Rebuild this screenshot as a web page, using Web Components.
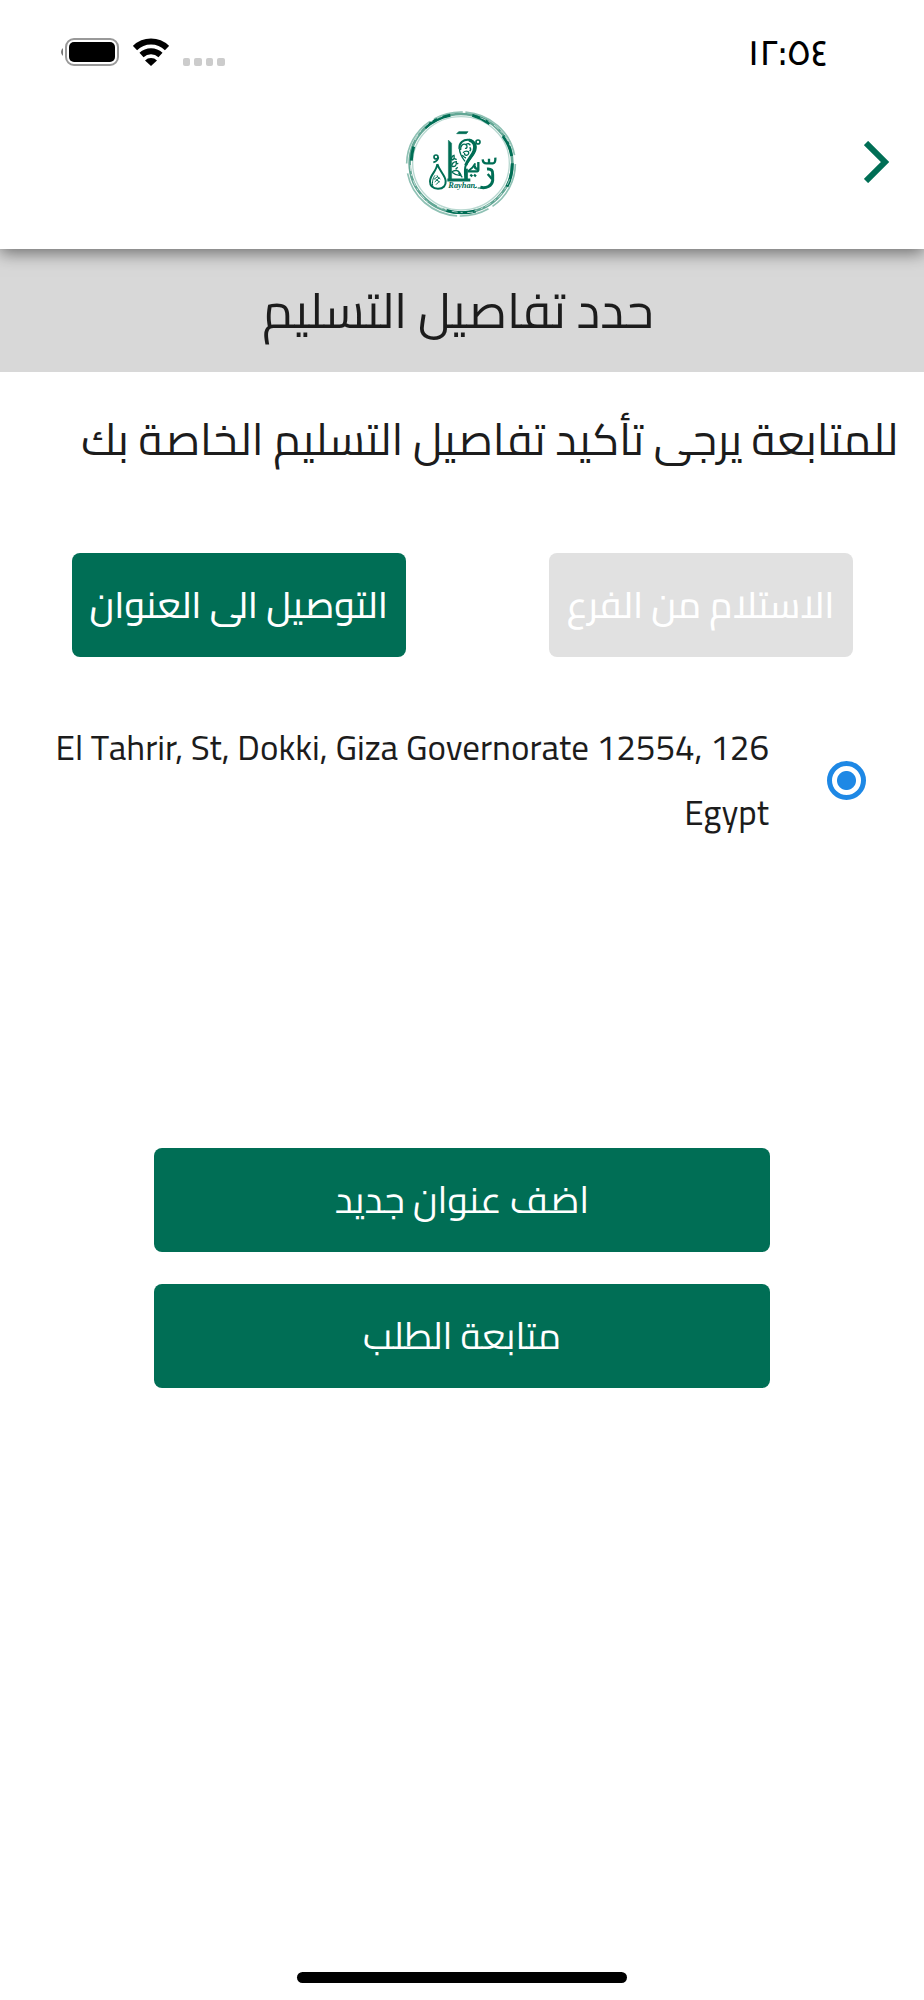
<!DOCTYPE html>
<html lang="ar" dir="rtl">
<head>
<meta charset="utf-8">
<meta name="viewport" content="width=device-width, initial-scale=1">
<title>حدد تفاصيل التسليم</title>
<style>
  body {
    margin: 0;
    background-color: #fff;
    color: #1c1c1c;
    font-family: Cairo, "Noto Sans", sans-serif;
  }
</style>
</head>
<body>
<delivery-page>
  <status-bar slot="top">١٢:٥٤</status-bar>
  <app-bar slot="top"></app-bar>
  <page-title>حدد تفاصيل التسليم</page-title>
  <page-intro>للمتابعة يرجى تأكيد تفاصيل التسليم الخاصة بك</page-intro>
  <delivery-options>
    <app-button kind="muted">الاستلام من الفرع</app-button>
    <app-button kind="choice">التوصيل الى العنوان</app-button>
  </delivery-options>
  <address-option>126 El Tahrir, St, Dokki, Giza Governorate 12554, Egypt</address-option>
  <page-actions>
    <app-button>اضف عنوان جديد</app-button>
    <app-button>متابعة الطلب</app-button>
  </page-actions>
</delivery-page>

<script>
class DeliveryPage extends HTMLElement {
  constructor() {
    super();
    this.attachShadow({ mode: "open" }).innerHTML = `
      <style>
        :host {
          display: flex;
          flex-direction: column;
          min-height: 100vh;
        }
        header {
          position: relative;
          background-color: #fff;
          box-shadow: 0 4px 16px rgba(0, 0, 0, 0.5);
        }
        main {
          flex: 1;
        }
        .home {
          width: calc(100% * 5 / 14);
          height: 11px;
          margin: 0 auto 17px;
          border-radius: 6px;
          background-color: #000;
        }
      </style>
      <header><slot name="top"></slot></header>
      <main><slot></slot></main>
      <div class="home"></div>
    `;
  }
}

class StatusBar extends HTMLElement {
  constructor() {
    super();
    this.attachShadow({ mode: "open" }).innerHTML = `
      <style>
        :host {
          display: flex;
          justify-content: space-between;
          align-items: center;
          height: 96px;
          padding: 4px 96px 0 60px;
          direction: ltr;
          color: #000;
        }
        .icons {
          display: flex;
          align-items: center;
          gap: 13px;
        }
        time {
          font-size: 36px;
          font-weight: 600;
          line-height: 48px;
        }
      </style>
      <div class="icons">
        <svg width="60" height="28" viewBox="0 0 60 28" role="img" aria-label="Battery">
          <path d="M3 10v8a5 5 0 0 1 0-8z" fill="#777"/>
          <rect x="6" y="1" width="52" height="26" rx="8" fill="none" stroke="#999" stroke-width="2"/>
          <rect x="9" y="4" width="46" height="20" rx="5"/>
        </svg>
        <svg width="36" height="28" viewBox="0 0 36 28" role="img" aria-label="Wi-Fi">
          <path d="M2 10a23 23 0 0 1 32 0" fill="none" stroke="#000" stroke-width="6"/>
          <path d="M8.500 17a14 14 0 0 1 19 0" fill="none" stroke="#000" stroke-width="6"/>
          <path d="M12 22.500a8.500 8.500 0 0 1 12 0L18 28z"/>
        </svg>
        <svg width="43" height="28" viewBox="0 0 43 28" fill="#ccc" aria-hidden="true">
          <rect x="1" y="20" width="7" height="8" rx="2"/>
          <rect x="12" y="20" width="8" height="8" rx="2"/>
          <rect x="24" y="20" width="7" height="8" rx="2"/>
          <rect x="35" y="20" width="8" height="8" rx="2"/>
        </svg>
      </div>
      <time><slot></slot></time>
    `;
  }
}

class BrandLogo extends HTMLElement {
  constructor() {
    super();
    this.attachShadow({ mode: "open" }).innerHTML = `
      <style>
        :host {
          display: block;
        }
        svg {
          display: block;
          width: 130px;
          height: 126px;
        }
      </style>
      <svg viewBox="0 0 390 378" fill="none" stroke="#006e55" role="img" aria-label="Rayhan">
        <!-- brushed ring -->
        <ellipse cx="192" cy="192" rx="163" ry="156" stroke="#8fc1b4" stroke-width="5" stroke-dasharray="150 14 90 8 210 30"/>
        <ellipse cx="192" cy="190" rx="154" ry="148" stroke="#63a795" stroke-width="8"/>
        <ellipse cx="192" cy="190" rx="145" ry="140" stroke="#b8d8d0" stroke-width="4"/>
        <path d="M50 140Q44 160 43 182M84 84Q115 55 160 46M226 46Q252 53 278 71M318 108Q340 138 344 168M346 190Q346 230 330 260M148 331Q190 345 236 333" stroke-width="9"/>
        <g stroke="#fff" stroke-width="2" stroke-dasharray="18 9 6 14">
          <path d="M40 195Q42 258 92 306M250 53Q320 80 345 150M338 238Q312 308 232 333"/>
          <path d="M54 120Q82 66 138 48M120 318Q172 344 232 336"/>
        </g>
        <!-- noon -->
        <path d="M121 192C119 214 99 224 99 244C99 260 110 266 123 266C140 266 147 256 146 243C145 226 127 213 121 192" stroke-width="6"/>
        <path d="M108 262C104 246 108 234 114 226M111 238l10-8M113 246l14-13M117 254l10-10M124 232l6 5M120 226l5 10M116 238l12 8" stroke-width="3"/>
        <circle cx="117" cy="171" r="6" stroke-width="5"/>
        <path d="M124 171Q124 183 109 187" stroke-width="5"/>
        <!-- alef, vine and base line -->
        <path d="M154 120L164 130V240H154z" fill="#006e55" stroke-width="1"/>
        <path d="M151 240H220" stroke-width="9"/>
        <path d="M164 216Q172 210 180 212T192 226Q178 228 164 216M164 199Q180 202 178 185Q165 186 164 199M164 180Q174 179 171 166Q162 169 164 180M171 175l8 4M176 192l8-2M176 208l6-6M184 218l12 14" stroke-width="4"/>
        <!-- haa with the scroll inside -->
        <path d="M187 146C186 128 200 118 214 119C232 121 240 136 235 151C230 168 213 180 206 197C202 208 204 222 205 238" stroke-width="6"/>
        <path d="M216 120C232 124 236 138 231 152C226 167 212 179 206 196" stroke-width="9"/>
        <path d="M187 145C188 162 194 172 204 184M191 150C190 138 197 130 205 133C213 136 211 147 204 145M207 133Q216 128 220 136M198 158Q206 151 214 155Q218 162 209 166Q201 166 203 159M196 165Q200 172 207 174M218 142Q224 148 218 154" stroke-width="4"/>
        <path d="M208 206V238" stroke-width="9"/>
        <path d="M179 101L185 95H213L208 101z" fill="#006e55" stroke-width="2"/>
        <circle cx="243" cy="126" r="6" stroke-width="5"/>
        <path d="M214 213Q228 204 235 190" stroke-width="6"/>
        <path d="M244 186V209Q244 214 236 214H212M244 206Q232 208 234 196" stroke-width="7"/>
        <path d="M220 224l6 5M231 224l6 5" stroke-width="7"/>
        <!-- seen and raa -->
        <path d="M257 178Q258 190 268 190H288Q296 190 295 173M276 176V189" stroke-width="7"/>
        <path d="M270 207Q289 205 287 224V242C285 258 268 266 250 262" stroke-width="9"/>
        <path d="M272 222L285 237" stroke-width="7"/>
        <text x="154" y="263" fill="#006e55" stroke="none" font-family="Liberation Serif, serif" font-size="25" font-style="italic" font-weight="700" direction="ltr">Rayhan</text>
        <path d="M232 264l8-3M242 264h9" stroke-width="3"/>
      </svg>
    `;
  }
}

class AppBar extends HTMLElement {
  constructor() {
    super();
    this.attachShadow({ mode: "open" }).innerHTML = `
      <style>
        :host {
          display: grid;
          grid-template-columns: 1fr auto 1fr;
          align-items: start;
          height: 149px;
          padding: 0 24px;
        }
        button {
          justify-self: start;
          display: flex;
          align-items: center;
          justify-content: center;
          width: 46px;
          height: 124px;
          padding: 0;
          border: 0;
          background: none;
          color: #006e55;
          cursor: pointer;
        }
      </style>
      <button type="button" aria-label="رجوع">
        <svg width="26" height="42" viewBox="0 0 26 42" fill="none" stroke="currentColor" stroke-width="6">
          <path d="M2 2l19 19L2 40"/>
        </svg>
      </button>
      <brand-logo></brand-logo>
    `;
  }
}

class PageTitle extends HTMLElement {
  constructor() {
    super();
    this.attachShadow({ mode: "open" }).innerHTML = `
      <style>
        :host {
          display: block;
          padding: 16px 32px 16px 24px;
          background-color: #d8d8d8;
          text-align: center;
        }
        h1 {
          margin: 0;
          font-size: 49px;
          font-weight: 400;
          line-height: 91px;
        }
      </style>
      <h1><slot></slot></h1>
    `;
  }
}

class PageIntro extends HTMLElement {
  constructor() {
    super();
    this.attachShadow({ mode: "open" }).innerHTML = `
      <style>
        :host {
          display: block;
          padding: 26px 26px 0;
        }
        p {
          margin: 0;
          font-size: 44px;
          font-weight: 400;
          line-height: 82px;
        }
      </style>
      <p><slot></slot></p>
    `;
  }
}

class AppButton extends HTMLElement {
  constructor() {
    super();
    this.attachShadow({ mode: "open" }).innerHTML = `
      <style>
        :host {
          display: block;
        }
        button {
          display: block;
          width: 100%;
          height: 104px;
          padding: 0 18px 2px;
          border: 0;
          border-radius: 8px;
          background-color: #006e55;
          color: #fff;
          font-family: inherit;
          font-size: 37px;
          font-weight: 400;
          cursor: pointer;
        }
        :host([kind]) button {
          font-weight: 500;
        }
        :host([kind="muted"]) button {
          background-color: #e1e1e1;
        }
      </style>
      <button type="button"><slot></slot></button>
    `;
  }
}

class DeliveryOptions extends HTMLElement {
  constructor() {
    super();
    this.attachShadow({ mode: "open" }).innerHTML = `
      <style>
        :host {
          display: flex;
          flex-wrap: wrap;
          justify-content: space-around;
          margin-top: 73px;
        }
      </style>
      <slot></slot>
    `;
  }
}

class AddressOption extends HTMLElement {
  constructor() {
    super();
    this.attachShadow({ mode: "open" }).innerHTML = `
      <style>
        :host {
          display: block;
          margin-top: 58px;
          padding: 0 58px 0 32px;
        }
        label {
          display: flex;
          align-items: center;
          gap: 58px;
          font-size: 35px;
          line-height: 65px;
        }
        input {
          flex: none;
          appearance: none;
          width: 39px;
          height: 39px;
          margin: 0;
          border: 5px solid #1e88e5;
          border-radius: 50%;
        }
        input:checked {
          background: radial-gradient(circle, #1e88e5 9px, transparent 10px);
        }
      </style>
      <label>
        <input type="radio" name="address" checked>
        <span><slot></slot></span>
      </label>
    `;
  }
}

class PageActions extends HTMLElement {
  constructor() {
    super();
    this.attachShadow({ mode: "open" }).innerHTML = `
      <style>
        :host {
          display: flex;
          flex-direction: column;
          gap: 32px;
          width: calc(100% * 2 / 3);
          margin: 303px auto 32px;
        }
      </style>
      <slot></slot>
    `;
  }
}

customElements.define("brand-logo", BrandLogo);
customElements.define("status-bar", StatusBar);
customElements.define("app-bar", AppBar);
customElements.define("page-title", PageTitle);
customElements.define("page-intro", PageIntro);
customElements.define("app-button", AppButton);
customElements.define("delivery-options", DeliveryOptions);
customElements.define("address-option", AddressOption);
customElements.define("page-actions", PageActions);
customElements.define("delivery-page", DeliveryPage);
</script>
</body>
</html>
